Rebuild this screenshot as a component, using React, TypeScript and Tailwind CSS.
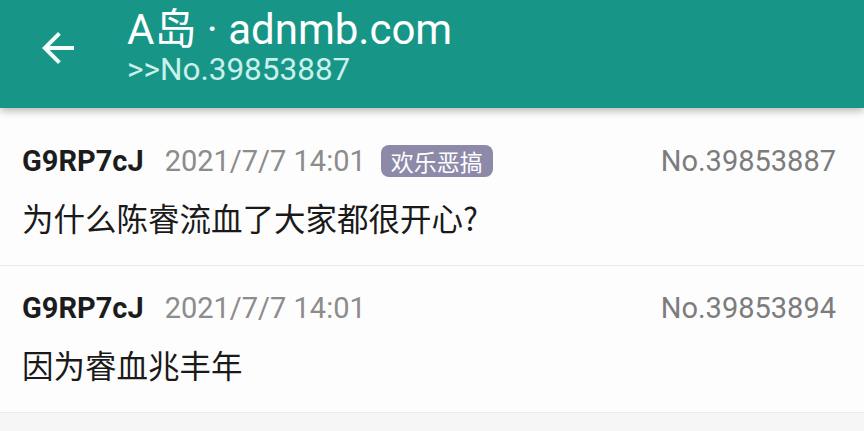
import React from "react";

const latin = { fontFamily: 'Roboto, "Noto Sans CJK SC", sans-serif' };
const cjk = { fontFamily: '"Noto Sans CJK SC", Roboto, sans-serif' };

function Row({ name, date, tag, no, text }: { name: string; date: string; tag?: string; no: string; text: string }) {
  return (
    <div className="pl-[22px] pr-[28px] pt-[24px] pb-[28px] border-b border-[#ebebeb]">
      <div className="flex items-center h-9">
        <span className="font-bold text-[29px] text-[#1c1c1c] leading-9" style={latin}>{name}</span>
        <span className="ml-[21px] text-[29px] text-[#8c8c8c] leading-9" style={latin}>{date}</span>
        {tag && (
          <span
            className="ml-[15px] h-8 px-[10px] rounded-lg bg-[#8d8aa9] text-white text-[23px] leading-8 flex items-center"
            style={cjk}
          >
            {tag}
          </span>
        )}
        <span className="ml-auto text-[29px] text-[#7c7c7c] leading-9" style={latin}>{no}</span>
      </div>
      <div className="mt-[18px] h-10 text-[31.5px] leading-10 text-[#1a1a1a]" style={cjk}>{text}</div>
    </div>
  );
}

export default function App() {
  return (
    <div className="w-[864px] h-[431px] overflow-hidden bg-[#f6f6f6]">
      <div className="relative z-10 h-[108px] bg-[#179688] flex shadow-[0_3px_8px_rgba(0,0,0,0.28)]">
        <div className="w-[127px] flex items-start pt-6 pl-[34px]">
          <svg width="48" height="48" viewBox="0 0 24 24" fill="#f4fbfa">
            <path d="M20 11H7.83l5.59-5.59L12 4l-8 8 8 8 1.41-1.41L7.83 13H20v-2z" />
          </svg>
        </div>
        <div className="flex flex-col pt-2">
          <div className="text-[42px] leading-[44px] text-white" style={latin}>A岛 · adnmb.com</div>
          <div className="text-[31.5px] leading-9 text-[#c9f0ea]" style={latin}>&gt;&gt;No.39853887</div>
        </div>
      </div>
      <div className="bg-[#fdfdfd] pt-[11px]">
        <Row name="G9RP7cJ" date="2021/7/7 14:01" tag="欢乐恶搞" no="No.39853887" text="为什么陈睿流血了大家都很开心?" />
        <Row name="G9RP7cJ" date="2021/7/7 14:01" no="No.39853894" text="因为睿血兆丰年" />
      </div>
    </div>
  );
}
